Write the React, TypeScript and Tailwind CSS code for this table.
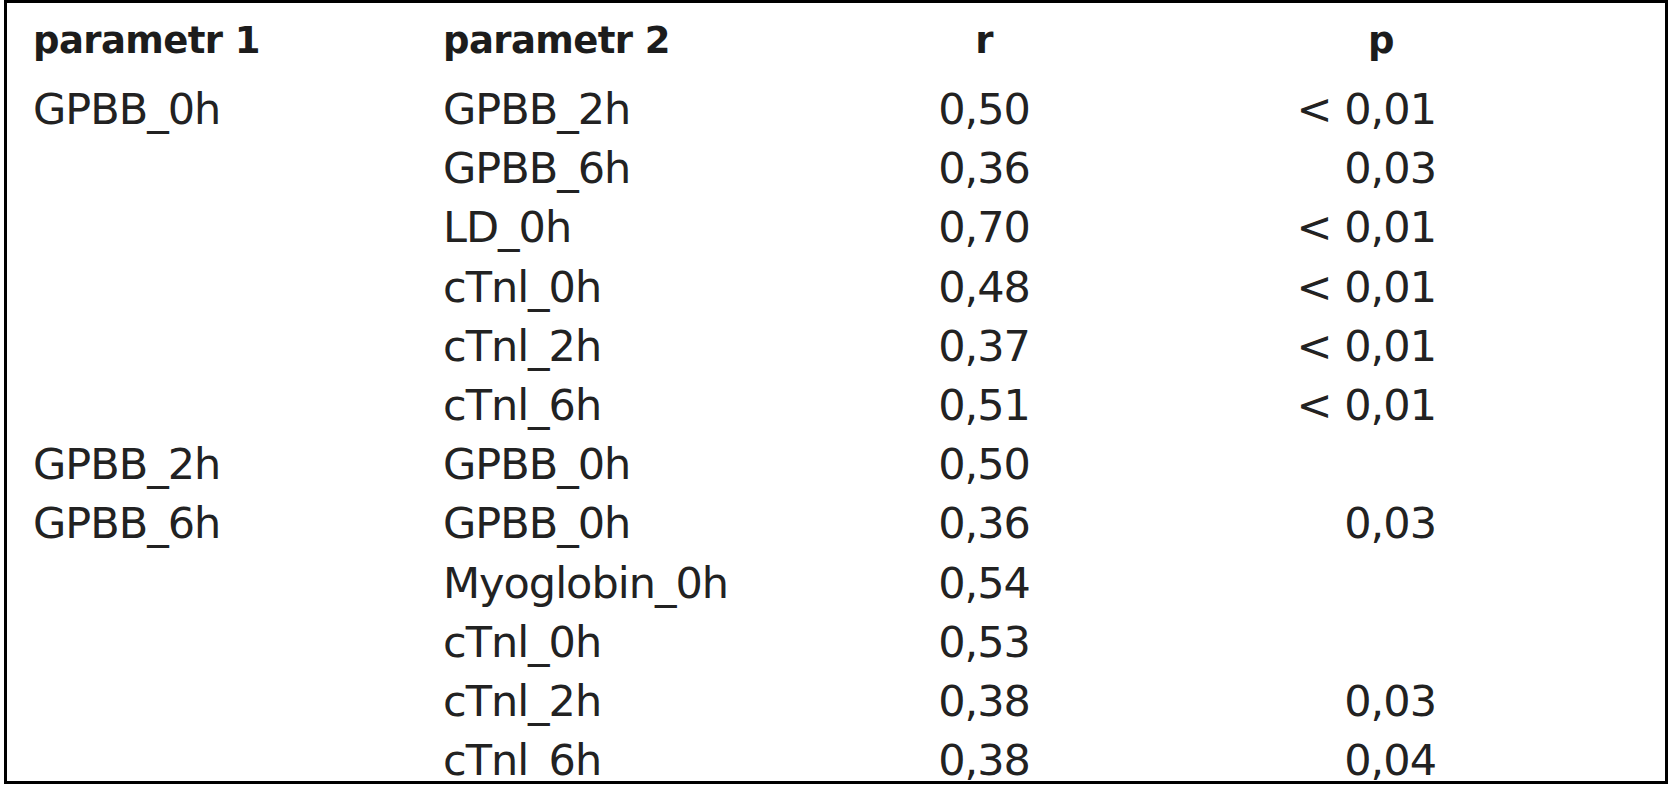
const ROWS: [string, string, string, string][] = [
  ["GPBB_0h", "GPBB_2h", "0,50", "< 0,01"],
  ["", "GPBB_6h", "0,36", "0,03"],
  ["", "LD_0h", "0,70", "< 0,01"],
  ["", "cTnl_0h", "0,48", "< 0,01"],
  ["", "cTnl_2h", "0,37", "< 0,01"],
  ["", "cTnl_6h", "0,51", "< 0,01"],
  ["GPBB_2h", "GPBB_0h", "0,50", ""],
  ["GPBB_6h", "GPBB_0h", "0,36", "0,03"],
  ["", "Myoglobin_0h", "0,54", ""],
  ["", "cTnl_0h", "0,53", ""],
  ["", "cTnl_2h", "0,38", "0,03"],
  ["", "cTnl_6h", "0,38", "0,04"],
];

const COLS = "grid grid-cols-[410px_437px_208px_348px]";

export default function App() {
  return (
    <div className="w-[1674px] h-[800px] bg-white pl-[4px] font-['DejaVu_Sans',sans-serif]">
      <div className="w-[1664px] h-[784px] border-[3px] border-black overflow-hidden pt-[8px] pl-[26px]">
        {/* header */}
        <div className={`${COLS} h-[69px] text-[37px] leading-[59px] font-bold text-[#1c1c1c] tracking-[-0.6px]`}>
          <div>parametr 1</div>
          <div>parametr 2</div>
          <div className="text-center">r</div>
          <div className="text-right pr-[42px]">p</div>
        </div>

        {/* rows */}
        {ROWS.map((row, i) => (
          <div key={i} className={`${COLS} h-[59.2px] text-[43px] leading-[59px] tracking-[-1px] text-[#222] whitespace-nowrap`}>
            <div>{row[0]}</div>
            <div>{row[1]}</div>
            <div className="text-center">{row[2]}</div>
            <div className="text-right">{row[3]}</div>
          </div>
        ))}
      </div>
    </div>
  );
}
